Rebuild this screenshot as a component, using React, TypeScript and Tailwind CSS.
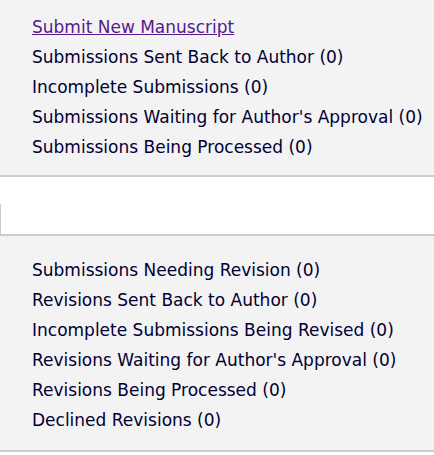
const top = [
  "Submissions Sent Back to Author (0)",
  "Incomplete Submissions (0)",
  "Submissions Waiting for Author's Approval (0)",
  "Submissions Being Processed (0)",
];

const bottom = [
  "Submissions Needing Revision (0)",
  "Revisions Sent Back to Author (0)",
  "Incomplete Submissions Being Revised (0)",
  "Revisions Waiting for Author's Approval (0)",
  "Revisions Being Processed (0)",
  "Declined Revisions (0)",
];

export default function App() {
  return (
    <div className="w-[434px] h-[455px] bg-white text-[17px] text-[#000033] font-['DejaVu_Sans',Verdana,sans-serif]">
      {/* authoring menu */}
      <div className="bg-[#f3f3f3] border-b-2 border-[#cccccc] pt-[12px] pb-[13px] pl-[32px]">
        <div className="leading-[30px]">
          <a href="#" className="text-[#551a8b] underline">Submit New Manuscript</a>
        </div>
        {top.map(t => (
          <div key={t} className="leading-[30px]">{t}</div>
        ))}
      </div>

      <div className="h-[59px] flex flex-col justify-end border-b-2 border-[#cccccc]">
        <div className="h-[30px] border-l border-[#cccccc]"></div>
      </div>

      {/* revisions menu */}
      <div className="bg-[#f3f3f3] border-b-2 border-[#cccccc] pt-[19px] pb-[15px] pl-[32px]">
        {bottom.map(t => (
          <div key={t} className="leading-[30px]">{t}</div>
        ))}
      </div>
    </div>
  )
}
